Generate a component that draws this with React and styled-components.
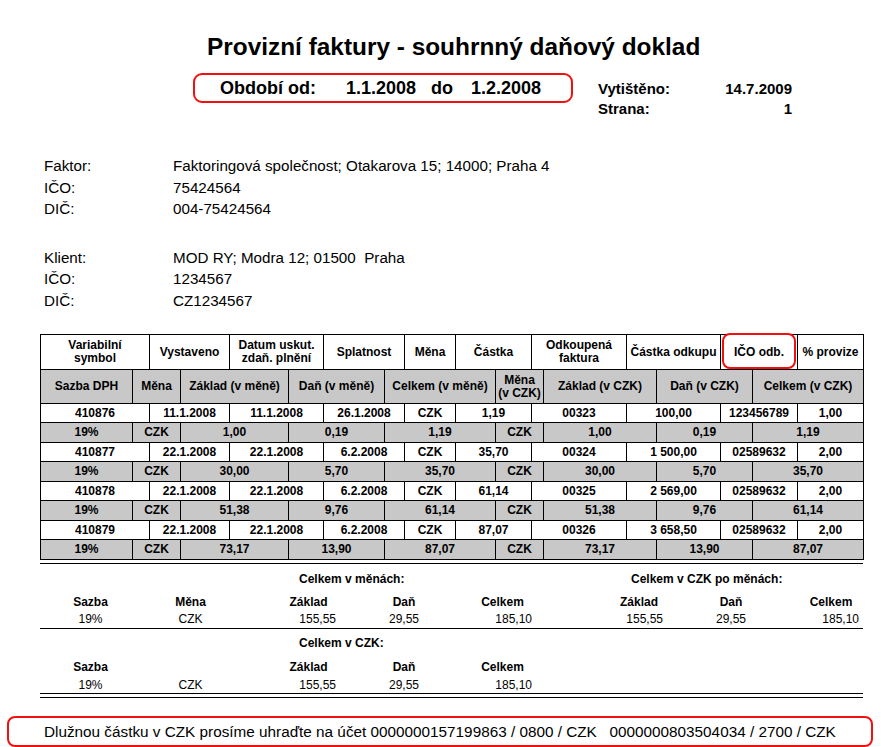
import React from "react";
import styled, { createGlobalStyle } from "styled-components";

const Global = createGlobalStyle`
  html, body { margin: 0; padding: 0; background: #fff; }
  body { font-family: "Liberation Sans", Arial, sans-serif; color: #000; }
`;

const RED = "#f01010";

const Page = styled.div`
  width: 881px;
  height: 747px;
  overflow: hidden;
  padding-top: 33px;
  box-sizing: border-box;
  background: #fff;
`;

const Title = styled.h1`
  margin: 0 0 0 207px;
  font-size: 24.4px;
  line-height: 28px;
  font-weight: bold;
  white-space: nowrap;
`;

const HeaderRow = styled.div`
  display: flex;
  align-items: flex-start;
  margin: 12px 0 0 193px;
`;

const PeriodBox = styled.div`
  box-sizing: border-box;
  width: 380px;
  height: 30px;
  border: 2px solid ${RED};
  border-radius: 9px;
  display: flex;
  align-items: center;
  padding-left: 25px;
  font-size: 18px;
  font-weight: bold;
  white-space: nowrap;
`;

const PeriodPart = styled.span`
  margin-left: ${(p) => p.$gap || 0}px;
`;

const PrintInfo = styled.div`
  display: grid;
  grid-template-columns: 1fr auto;
  width: 194px;
  margin: 6px 0 0 25px;
  font-size: 15px;
  font-weight: bold;
  line-height: 20px;
  white-space: nowrap;
`;

const InfoValue = styled.span`
  text-align: right;
`;

const Party = styled.div`
  display: grid;
  grid-template-columns: 129px 1fr;
  margin: ${(p) => p.$top}px 0 0 44px;
  font-size: 15.2px;
  line-height: 21.5px;
  white-space: nowrap;
`;

const Table = styled.div`
  margin: 23px 0 0 40px;
  width: 824px;
  box-sizing: border-box;
  border-left: 1px solid #000;
  border-top: 1px solid #000;
  font-size: 12px;
  font-weight: bold;
`;

const COLS_A = "109px 80px 94px 81px 51px 76px 95px 94px 77px 66px";
const COLS_B = "92px 48px 108px 96px 111px 48px 113px 96px 111px";

const Row = styled.div`
  display: grid;
  grid-template-columns: ${(p) => p.$cols};
  height: ${(p) => p.$h}px;
  box-sizing: border-box;
  border-bottom: 1px solid #000;
  background: ${(p) => (p.$shade ? "#c8c8c8" : "#fff")};
`;

const Cell = styled.div`
  position: relative;
  border-right: 1px solid #000;
  display: flex;
  align-items: center;
  justify-content: center;
  text-align: center;
  line-height: 13px;
  white-space: nowrap;
`;

const RedMark = styled.span`
  position: absolute;
  top: -2px;
  bottom: 0;
  left: 1px;
  right: 1px;
  border: 2px solid ${RED};
  border-radius: 8px;
  pointer-events: none;
`;

const Rule = styled.div`
  width: 823px;
  height: 1px;
  background: #000;
  margin: ${(p) => p.$top || 0}px 0 0 40px;
`;

const SUM_COLS = "101px 99px 20px 97px 94px 103px 36px 98px 86px 26px 62px";

const SumRow = styled.div`
  display: grid;
  grid-template-columns: ${SUM_COLS};
  margin-left: 40px;
  height: ${(p) => p.$h}px;
  align-items: center;
  font-size: 12px;
  line-height: 14px;
  white-space: nowrap;
`;

const SumCell = styled.div`
  grid-column: ${(p) => p.$col} / span ${(p) => p.$span || 1};
  grid-row: 1;
  text-align: ${(p) => p.$align || "center"};
  font-weight: ${(p) => (p.$bold ? "bold" : "normal")};
  padding-left: ${(p) => p.$pl || 0}px;
  padding-right: ${(p) => p.$pr || 0}px;
`;

const FooterBox = styled.div`
  box-sizing: border-box;
  margin: 18px 0 0 7px;
  width: 866px;
  height: 31px;
  border: 2px solid ${RED};
  border-radius: 8px;
  display: flex;
  align-items: center;
  padding-left: 35px;
  font-size: 15.3px;
  white-space: pre;
`;

const headA = [
  ["Variabilní", "symbol"],
  ["Vystaveno"],
  ["Datum uskut.", "zdaň. plnění"],
  ["Splatnost"],
  ["Měna"],
  ["Částka"],
  ["Odkoupená", "faktura"],
  ["Částka odkupu"],
  ["IČO odb."],
  ["% provize"],
];

const headB = [
  ["Sazba DPH"],
  ["Měna"],
  ["Základ (v měně)"],
  ["Daň (v měně)"],
  ["Celkem (v měně)"],
  ["Měna", "(v CZK)"],
  ["Základ (v CZK)"],
  ["Daň (v CZK)"],
  ["Celkem (v CZK)"],
];

const invoices = [
  {
    a: ["410876", "11.1.2008", "11.1.2008", "26.1.2008", "CZK", "1,19", "00323", "100,00", "123456789", "1,00"],
    b: ["19%", "CZK", "1,00", "0,19", "1,19", "CZK", "1,00", "0,19", "1,19"],
  },
  {
    a: ["410877", "22.1.2008", "22.1.2008", "6.2.2008", "CZK", "35,70", "00324", "1 500,00", "02589632", "2,00"],
    b: ["19%", "CZK", "30,00", "5,70", "35,70", "CZK", "30,00", "5,70", "35,70"],
  },
  {
    a: ["410878", "22.1.2008", "22.1.2008", "6.2.2008", "CZK", "61,14", "00325", "2 569,00", "02589632", "2,00"],
    b: ["19%", "CZK", "51,38", "9,76", "61,14", "CZK", "51,38", "9,76", "61,14"],
  },
  {
    a: ["410879", "22.1.2008", "22.1.2008", "6.2.2008", "CZK", "87,07", "00326", "3 658,50", "02589632", "2,00"],
    b: ["19%", "CZK", "73,17", "13,90", "87,07", "CZK", "73,17", "13,90", "87,07"],
  },
];

function Lines({ lines }) {
  return lines.map((l, i) => (
    <React.Fragment key={i}>
      {i > 0 && <br />}
      {l}
    </React.Fragment>
  ));
}

export default function App() {
  return (
    <Page>
      <Global />
      <Title>Provizní faktury - souhrnný daňový doklad</Title>

      <HeaderRow>
        <PeriodBox>
          <PeriodPart>Období od:</PeriodPart>
          <PeriodPart $gap={30}>1.1.2008</PeriodPart>
          <PeriodPart $gap={15}>do</PeriodPart>
          <PeriodPart $gap={18}>1.2.2008</PeriodPart>
        </PeriodBox>
        <PrintInfo>
          <span>Vytištěno:</span>
          <InfoValue>14.7.2009</InfoValue>
          <span>Strana:</span>
          <InfoValue>1</InfoValue>
        </PrintInfo>
      </HeaderRow>

      <Party $top={36}>
        <span>Faktor:</span>
        <span>Faktoringová společnost; Otakarova 15; 14000; Praha 4</span>
        <span>IČO:</span>
        <span>75424564</span>
        <span>DIČ:</span>
        <span>004-75424564</span>
      </Party>

      <Party $top={27}>
        <span>Klient:</span>
        <span>MOD RY; Modra 12; 01500&nbsp; Praha</span>
        <span>IČO:</span>
        <span>1234567</span>
        <span>DIČ:</span>
        <span>CZ1234567</span>
      </Party>

      <Table>
        <Row $cols={COLS_A} $h={35}>
          {headA.map((h, i) => (
            <Cell key={i}>
              <span>
                <Lines lines={h} />
              </span>
              {i === 8 && <RedMark />}
            </Cell>
          ))}
        </Row>
        <Row $cols={COLS_B} $h={34} $shade>
          {headB.map((h, i) => (
            <Cell key={i}>
              <span>
                <Lines lines={h} />
              </span>
            </Cell>
          ))}
        </Row>
        {invoices.map((inv, r) => (
          <React.Fragment key={r}>
            <Row $cols={COLS_A} $h={19}>
              {inv.a.map((v, i) => (
                <Cell key={i}>{v}</Cell>
              ))}
            </Row>
            <Row $cols={COLS_B} $h={20} $shade>
              {inv.b.map((v, i) => (
                <Cell key={i}>{v}</Cell>
              ))}
            </Row>
          </React.Fragment>
        ))}
      </Table>

      <Rule $top={3} />
      <SumRow $h={30}>
        <SumCell $col={4} $span={3} $align="left" $pl={39} $bold>
          Celkem v měnách:
        </SumCell>
        <SumCell $col={8} $span={4} $align="left" $pl={41} $bold>
          Celkem v CZK po měnách:
        </SumCell>
      </SumRow>
      <SumRow $h={16}>
        <SumCell $col={1} $bold>Sazba</SumCell>
        <SumCell $col={2} $bold>Měna</SumCell>
        <SumCell $col={4} $bold>Základ</SumCell>
        <SumCell $col={5} $bold>Daň</SumCell>
        <SumCell $col={6} $bold>Celkem</SumCell>
        <SumCell $col={8} $bold>Základ</SumCell>
        <SumCell $col={9} $bold>Daň</SumCell>
        <SumCell $col={11} $bold>Celkem</SumCell>
      </SumRow>
      <SumRow $h={18}>
        <SumCell $col={1}>19%</SumCell>
        <SumCell $col={2}>CZK</SumCell>
        <SumCell $col={4} $align="right" $pr={21}>155,55</SumCell>
        <SumCell $col={5}>29,55</SumCell>
        <SumCell $col={6} $align="right" $pr={22}>185,10</SumCell>
        <SumCell $col={8} $align="right" $pr={25}>155,55</SumCell>
        <SumCell $col={9}>29,55</SumCell>
        <SumCell $col={11} $align="right" $pr={3}>185,10</SumCell>
      </SumRow>
      <Rule />
      <SumRow $h={28}>
        <SumCell $col={4} $span={3} $align="left" $pl={39} $bold>
          Celkem v CZK:
        </SumCell>
      </SumRow>
      <SumRow $h={20}>
        <SumCell $col={1} $bold>Sazba</SumCell>
        <SumCell $col={4} $bold>Základ</SumCell>
        <SumCell $col={5} $bold>Daň</SumCell>
        <SumCell $col={6} $bold>Celkem</SumCell>
      </SumRow>
      <SumRow $h={16}>
        <SumCell $col={1}>19%</SumCell>
        <SumCell $col={2}>CZK</SumCell>
        <SumCell $col={4} $align="right" $pr={21}>155,55</SumCell>
        <SumCell $col={5}>29,55</SumCell>
        <SumCell $col={6} $align="right" $pr={22}>185,10</SumCell>
      </SumRow>
      <Rule />
      <Rule $top={3} />

      <FooterBox>
        {"Dlužnou částku v CZK prosíme uhraďte na účet 0000000157199863 / 0800 / CZK   0000000803504034 / 2700 / CZK"}
      </FooterBox>
    </Page>
  );
}
